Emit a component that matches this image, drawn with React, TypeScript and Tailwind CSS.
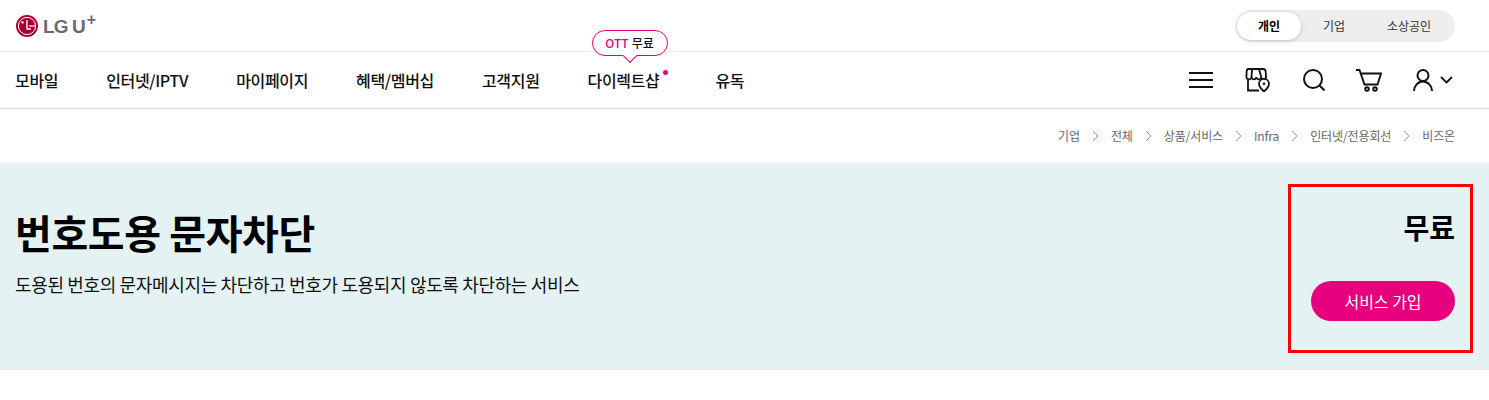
const font = { fontFamily: '"Noto Sans CJK KR", "Noto Sans", sans-serif' };

const navItems = ["모바일", "인터넷/IPTV", "마이페이지", "혜택/멤버십", "고객지원", "다이렉트샵", "유독"];
const crumbs = ["기업", "전체", "상품/서비스", "Infra", "인터넷/전용회선", "비즈온"];

function Logo() {
  return (
    <div className="flex items-center">
      <svg width="22" height="22" viewBox="0 0 22 22">
        <circle cx="11" cy="11" r="11" fill="#a50034" />
        <circle cx="11" cy="11" r="8.6" fill="none" stroke="#fff" strokeWidth="1" />
        <circle cx="6.6" cy="7.4" r="1.2" fill="#fff" />
        <path d="M11 5v9h4" fill="none" stroke="#fff" strokeWidth="1.3" />
        <path d="M13 11h6" stroke="#fff" strokeWidth="1.2" />
      </svg>
      <span
        className="ml-[5px] mt-[1px] text-[19px] leading-none font-bold text-[#6b6b70] tracking-[-0.9px]"
        style={{ fontFamily: '"Liberation Sans", sans-serif' }}
      >
        LG U
      </span>
      <span
        className="ml-[2px] -mt-[11px] text-[16px] leading-none font-bold text-[#6b6b70]"
        style={{ fontFamily: '"Liberation Sans", sans-serif' }}
      >
        +
      </span>
    </div>
  );
}

function Icons() {
  return (
    <div className="flex items-center text-[#111]">
      <svg width="24" height="16" viewBox="0 0 24 16" className="mr-[32px]" fill="none" stroke="currentColor" strokeWidth="2">
        <path d="M0 1h24M0 8h24M0 15h24" />
      </svg>
      <svg width="25" height="24" viewBox="0 0 25 24" className="mr-[33px]" fill="none" stroke="currentColor" strokeWidth="1.8">
        <path d="M3.500 1h14.500c1.500 0 2.500 1 2.700 2.500L21 9c0 1.500-1 2.300-2.300 2.300S16.400 10.500 16.200 9c-.2 1.500-1 2.300-2.300 2.300S11.500 10.500 11.300 9c-.2 1.500-1 2.300-2.300 2.300S6.700 10.500 6.500 9c-.2 1.500-1.200 2.300-2.500 2.300S1.400 10.500 1.400 9L1.600 3.500C1.700 2 2.200 1 3.500 1z" />
        <path d="M7 1 6.500 9M14 1l2.200 8" />
        <path d="M3 11.500V22.500h11" />
        <path d="M19 23.500s-5-4.200-5-7.700a5 5 0 0 1 10 0c0 3.500-5 7.700-5 7.700z" fill="#fff" />
        <circle cx="19" cy="15.800" r="1.300" fill="currentColor" stroke="none" />
      </svg>
      <svg width="22" height="22" viewBox="0 0 22 22" className="mr-[31px]" fill="none" stroke="currentColor" strokeWidth="2">
        <circle cx="10" cy="10" r="9" />
        <path d="m16.500 16.500 5 5" />
      </svg>
      <svg width="26" height="23" viewBox="0 0 26 23" className="mr-[31px]" fill="none" stroke="currentColor" strokeWidth="1.9">
        <path d="M0 1h3.500l5 14.500h13L25 4.500H5" />
        <circle cx="11" cy="20" r="1.800" />
        <circle cx="19" cy="20" r="1.800" />
      </svg>
      <svg width="20" height="22" viewBox="0 0 20 22" className="mr-[7px]" fill="none" stroke="currentColor" strokeWidth="2">
        <circle cx="10" cy="6.500" r="5.500" />
        <path d="M1 22c0-5 4-9.500 9-9.500s9 4.500 9 9.500" />
      </svg>
      <svg width="13" height="8" viewBox="0 0 13 8" fill="none" stroke="currentColor" strokeWidth="1.800">
        <path d="m1 1 5.500 5.500L12 1" />
      </svg>
    </div>
  );
}

export default function App() {
  return (
    <div className="w-[1489px] h-[400px] bg-white overflow-hidden text-[#111]" style={font}>
      {/* Top bar */}
      <div className="h-[52px] border-b border-[#eeeeee] flex items-center justify-between pl-[16px] pr-[34px]">
        <Logo />
        <div className="flex items-center h-[32px] w-[219px] rounded-full bg-[#eeeeee] pl-[1px] text-[12px] text-[#333]">
          <div className="w-[64px] h-[28px] rounded-full bg-white shadow-[0_1px_4px_rgba(0,0,0,0.2)] flex items-center justify-center font-bold text-black">
            개인
          </div>
          <div className="w-[66px] text-center">기업</div>
          <div className="w-[84px] text-center">소상공인</div>
        </div>
      </div>

      {/* Main nav */}
      <div className="relative h-[57px] border-b border-[#dddddd] flex items-center justify-between pl-[15px] pr-[36px]">
        <nav className="flex items-center gap-[48px] text-[16px] font-medium tracking-[-0.33px]">
          {navItems.map((item) =>
            item === "다이렉트샵" ? (
              <div key={item} className="relative whitespace-nowrap pr-[8px]">
                {item}
                <span className="absolute right-[-1px] top-[2px] w-[5px] h-[5px] rounded-full bg-[#e6007e]" />
                <div className="absolute left-[4px] -top-[38px] w-[76px] h-[26px] rounded-full border border-[#e6007e] bg-white flex items-center justify-center text-[12px] font-medium tracking-normal">
                  <span className="text-[#e6007e] mr-[3px]">OTT</span>
                  <span>무료</span>
                  <span className="absolute left-[32px] -bottom-[6px] w-[10px] h-[10px] rotate-45 bg-white border-r border-b border-[#e6007e]" />
                </div>
              </div>
            ) : (
              <div key={item} className="whitespace-nowrap">
                {item}
              </div>
            ),
          )}
        </nav>
        <Icons />
      </div>

      {/* Breadcrumb */}
      <div className="h-[54px] flex items-center justify-end pr-[34px] text-[12px] tracking-[-0.12px] text-[#666]">
        {crumbs.map((c, i) => (
          <div key={c} className="flex items-center">
            {i > 0 && (
              <svg width="7" height="12" viewBox="0 0 7 12" className="mx-[12px]" fill="none" stroke="#999" strokeWidth="1">
                <path d="m1 1 5 5-5 5" />
              </svg>
            )}
            <span>{c}</span>
          </div>
        ))}
      </div>

      {/* Hero banner */}
      <div className="h-[207px] bg-[#e4f2f3] flex justify-between pl-[15px] pr-[16px] pt-[21px]">
        <div className="pt-[18px]">
          <h1 className="text-[40px] leading-[60px] font-bold tracking-[-0.4px] text-black">번호도용 문자차단</h1>
          <p className="mt-[9px] text-[18px] leading-[26px] tracking-[-0.35px] text-[#111]">
            도용된 번호의 문자메시지는 차단하고 번호가 도용되지 않도록 차단하는 서비스
          </p>
        </div>
        <div className="w-[185px] h-[169px] border-[3px] border-[#ff0000] flex flex-col items-end pr-[15px] pt-[20px]">
          <div className="text-[28px] leading-[40px] font-bold text-black">무료</div>
          <button className="mt-[34px] w-[144px] h-[40px] rounded-full bg-[#e6007e] text-white text-[16px]">
            서비스 가입
          </button>
        </div>
      </div>
    </div>
  );
}
